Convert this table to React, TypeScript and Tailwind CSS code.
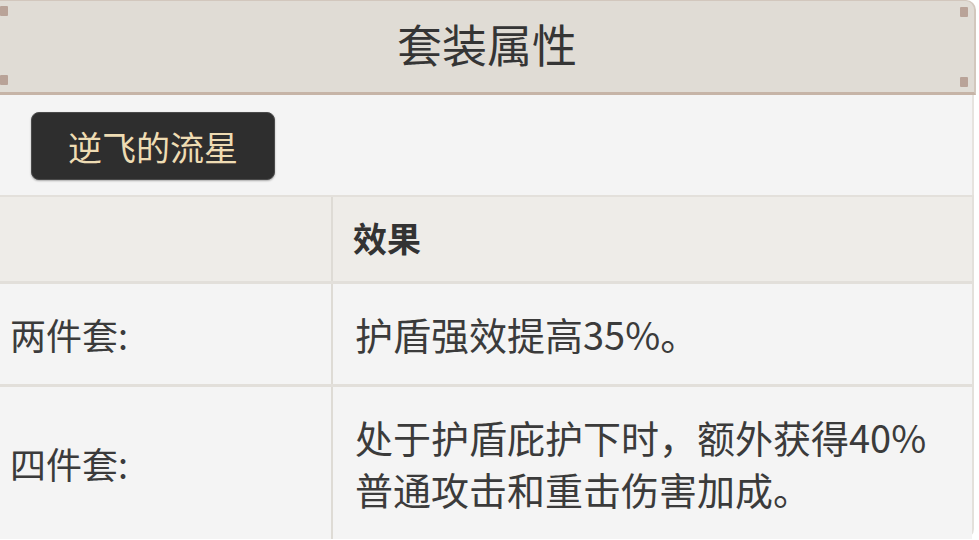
const cjk = "font-['Noto_Sans_CJK_SC','Noto_Sans',sans-serif]";

function Corner({ className }: { className: string }) {
  return <span className={`absolute h-[10px] w-[8px] rounded-[1px] bg-[#b9a398] ${className}`} />;
}

const rows = [
  { name: "两件套:", effect: ["护盾强效提高35%。"] },
  {
    name: "四件套:",
    effect: ["处于护盾庇护下时，额外获得40%", "普通攻击和重击伤害加成。"],
  },
];

export default function App() {
  return (
    <div className={`h-[540px] w-[979px] overflow-hidden bg-white text-[#3b3b3b] ${cjk}`}>
      {/* title bar */}
      <div className="relative mr-[3px] flex h-[95px] items-center justify-center rounded-tr-[10px] border-r-2 border-b-[3px] border-t border-[#d2c7bd] border-b-[#c6b4a7] bg-[#e0dcd5]">
        <h1 className="pb-[6px] text-[45px] leading-none font-normal text-[#353535]">套装属性</h1>
        <Corner className="top-[5px] left-0" />
        <Corner className="bottom-[7px] left-0" />
        <Corner className="top-[6px] right-[6px]" />
        <Corner className="bottom-[5px] right-[6px]" />
      </div>

      {/* set name */}
      <div className="mr-[5px] border-r-2 border-[#e6e3df] bg-[#f4f4f4] pt-[17px] pb-[15px] pl-[31px]">
        <div className="flex h-[68px] w-[244px] items-center justify-center rounded-[8px] border border-[#4a4a4a] bg-[#2e2e2e] text-[34px] text-[#eedcb3] shadow-[0_1px_2px_rgba(0,0,0,0.3)]">
          逆飞的流星
        </div>
      </div>

      {/* effects table */}
      <div className="mr-[5px] rounded-br-[10px] border-t-2 border-r-2 border-[#e3e0db]">
        <div className="grid grid-cols-[333px_1fr] border-b-[3px] border-[#e2dfda] bg-[#eeece8]">
          <div className="h-[84px] border-r-2 border-[#dedbd5]" />
          <div className="flex h-[84px] items-center pb-[4px] pl-[20px] text-[34px] font-bold text-[#333]">效果</div>
        </div>
        {rows.map((r, i) => (
          <div
            key={r.name}
            className={`grid grid-cols-[333px_1fr] bg-[#f4f4f4] ${i < rows.length - 1 ? "border-b-[3px] border-[#e2dfda]" : ""}`}
          >
            <div className="flex items-center border-r-2 border-[#dedbd5] pl-[10px] text-[36px]">{r.name}</div>
            <div className="py-[24px] pl-[22px] text-[38px] leading-[52px]">
              {r.effect.map((l) => (
                <div key={l}>{l}</div>
              ))}
            </div>
          </div>
        ))}
      </div>
    </div>
  );
}
